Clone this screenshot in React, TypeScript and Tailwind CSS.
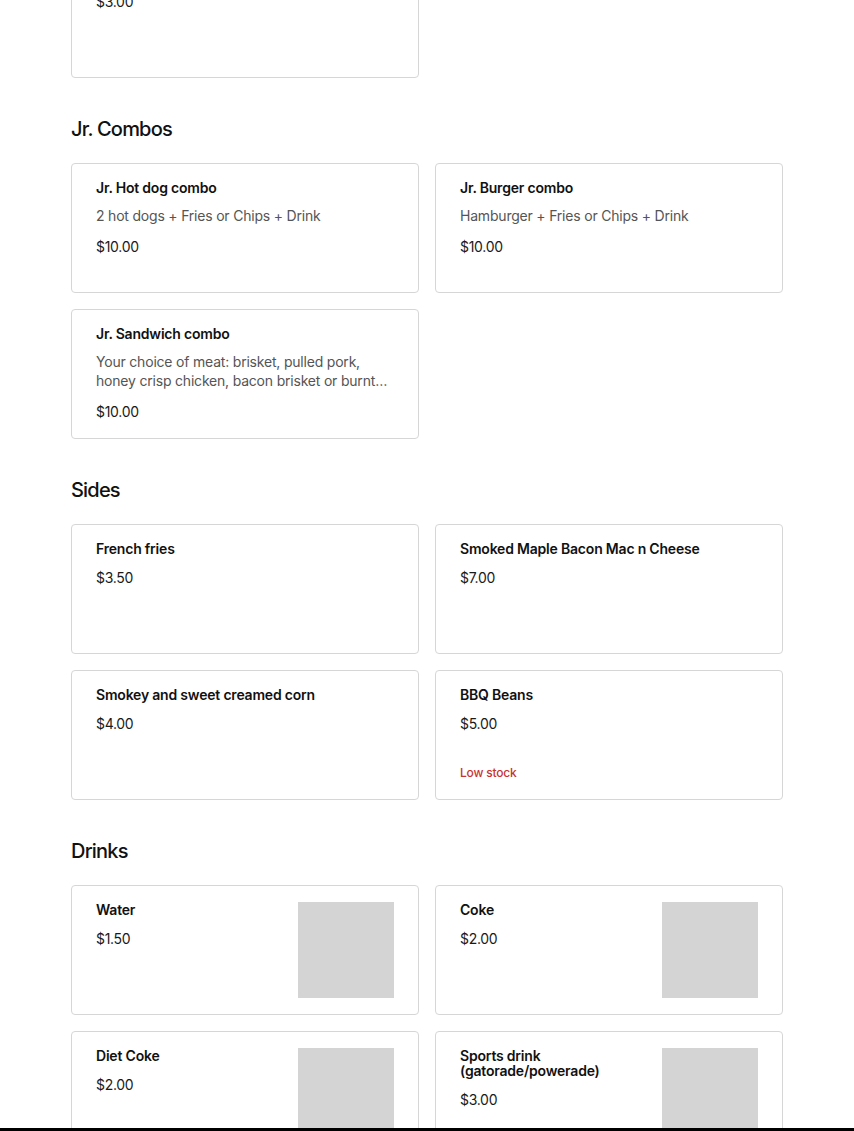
import React from "react";

type Item = { title: string; desc?: string; price: string; lowStock?: boolean; image?: boolean };

const sections: { heading?: string; items: Item[] }[] = [
  { items: [{ title: "Kids drink", price: "$3.00" }] },
  {
    heading: "Jr. Combos",
    items: [
      { title: "Jr. Hot dog combo", desc: "2 hot dogs + Fries or Chips + Drink", price: "$10.00" },
      { title: "Jr. Burger combo", desc: "Hamburger + Fries or Chips + Drink", price: "$10.00" },
      {
        title: "Jr. Sandwich combo",
        desc: "Your choice of meat: brisket, pulled pork, honey crisp chicken, bacon brisket or burnt ends + Fries or Chips + Drink",
        price: "$10.00",
      },
    ],
  },
  {
    heading: "Sides",
    items: [
      { title: "French fries", price: "$3.50" },
      { title: "Smoked Maple Bacon Mac n Cheese", price: "$7.00" },
      { title: "Smokey and sweet creamed corn", price: "$4.00" },
      { title: "BBQ Beans", price: "$5.00", lowStock: true },
    ],
  },
  {
    heading: "Drinks",
    items: [
      { title: "Water", price: "$1.50", image: true },
      { title: "Coke", price: "$2.00", image: true },
      { title: "Diet Coke", price: "$2.00", image: true },
      { title: "Sports drink (gatorade/powerade)", price: "$3.00", image: true },
    ],
  },
];

function Card({ item }: { item: Item }) {
  return (
    <div className="flex min-h-[130px] gap-4 rounded-[4px] border border-[#d6d6d6] bg-white px-6 py-4">
      <div className="flex min-w-0 flex-1 flex-col">
        <div className="text-[14px] font-semibold leading-[15px] tracking-[-0.2px] text-[#111]">{item.title}</div>
        {item.desc && (
          <div className="mt-[11px] line-clamp-2 text-[14px] leading-[19px] tracking-[-0.2px] text-[#555]">
            {item.desc}
          </div>
        )}
        <div className="mt-[12px] text-[14px] leading-5 tracking-[-0.3px] text-[#1a1a1a]">{item.price}</div>
        {item.lowStock && (
          <div className="mt-auto text-[12px] font-medium leading-5 tracking-[-0.2px] text-[#c8332f]">Low stock</div>
        )}
      </div>
      {item.image && <div className="h-[96px] w-[96px] shrink-0 bg-[#d4d4d4]" />}
    </div>
  );
}

export default function App() {
  return (
    <div
      className="flex h-[1131px] flex-col overflow-hidden bg-white"
      style={{ fontFamily: "Inter, 'Noto Sans', sans-serif" }}
    >
      <div className="min-h-0 flex-1 overflow-hidden">
        <div className="mx-auto mt-[-52px] flex w-[712px] flex-col gap-[37px]">
          {sections.map((s, i) => (
            <section key={i}>
              {s.heading && (
                <h2 className="mb-5 text-[20px] font-medium leading-7 tracking-[-0.8px] text-[#111]">
                  {s.heading}
                </h2>
              )}
              <div className="grid grid-cols-2 gap-4">
                {s.items.map((it, j) => (
                  <Card key={j} item={it} />
                ))}
              </div>
            </section>
          ))}
        </div>
      </div>
      <div className="h-[3px] shrink-0 bg-black" />
    </div>
  );
}
